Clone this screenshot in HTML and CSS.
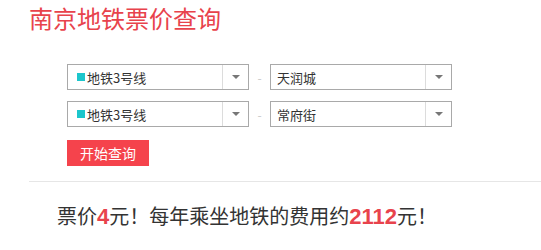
FILE: index.html
```html
<!DOCTYPE html>
<html lang="zh">
<head>
<meta charset="utf-8">
<link rel="stylesheet" href="styles.css">
</head>
<body>
<div class="page">
  <h1 class="title">南京地铁票价查询</h1>
  <div class="form">
    <div class="row">
      <div class="select line-select"><span class="swatch"></span><span class="label">地铁3号线</span><span class="arrow"></span></div>
      <span class="dash">-</span>
      <div class="select"><span class="label">天润城</span><span class="arrow"></span></div>
    </div>
    <div class="row">
      <div class="select line-select"><span class="swatch"></span><span class="label">地铁3号线</span><span class="arrow"></span></div>
      <span class="dash">-</span>
      <div class="select"><span class="label">常府街</span><span class="arrow"></span></div>
    </div>
    <button class="btn">开始查询</button>
  </div>
  <hr class="sep">
  <p class="result">票价<b>4</b>元！每年乘坐地铁的费用约<b>2112</b>元！</p>
</div>
</body>
</html>
```

FILE: styles.css
```css
html, body { margin: 0; padding: 0; background: #fff; }
body { font-family: "Microsoft YaHei", "Noto Sans CJK SC", "Liberation Sans", sans-serif; }
.page { padding: 3px 0 0 29px; }
.title {
  margin: 0;
  font-size: 24px;
  font-weight: normal;
  color: #e8434c;
  line-height: 29px;
}
.form { padding: 32px 0 0 38px; }
.row { display: flex; align-items: center; margin-bottom: 11px; height: 26px; }
.select {
  box-sizing: border-box;
  width: 182px;
  height: 26px;
  border: 1px solid #a9a9a9;
  display: flex;
  align-items: center;
  font-size: 13px;
  color: #333;
  position: relative;
}
.line-select { padding-left: 9px; }
.select .label { flex: 1; padding-left: 6px; }
.line-select .label { padding-left: 2px; }
.swatch { width: 8px; height: 8px; background: #1cc6cc; }
.arrow {
  width: 25px;
  height: 24px;
  border-left: 1px solid #dcdcdc;
  position: relative;
}
.arrow::after {
  content: "";
  position: absolute;
  left: 9px;
  top: 10px;
  border-left: 4px solid transparent;
  border-right: 4px solid transparent;
  border-top: 4px solid #777;
}
.dash { width: 21px; text-align: center; color: #c8c8c8; font-size: 12px; }
.btn {
  margin-top: 2px;
  width: 82px;
  height: 26px;
  border: none;
  background: #f5434c;
  color: #fff;
  font-family: inherit;
  font-size: 14px;
  padding: 0;
}
.sep {
  margin: 15px 0 0 0;
  border: none;
  border-top: 1px solid #e6e6e6;
  height: 0;
}
.result {
  margin: 20px 0 0 28px;
  font-size: 20px;
  color: #333;
  line-height: 28px;
}
.result b { color: #e8434c; font-family: "Liberation Sans", sans-serif; font-weight: bold; font-size: 22px; }
```
